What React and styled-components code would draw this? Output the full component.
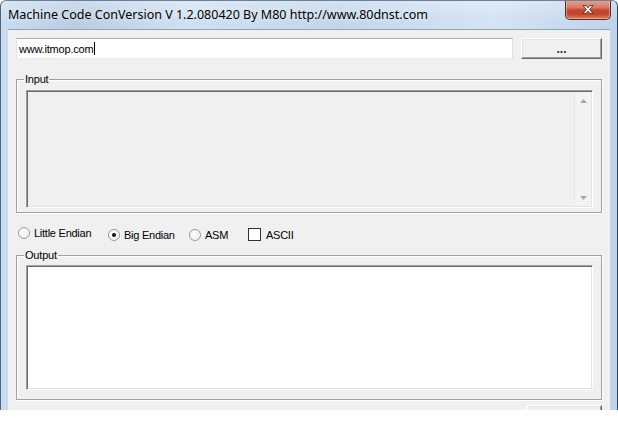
import React from "react";
import styled, { createGlobalStyle } from "styled-components";

const Global = createGlobalStyle`
  html, body { margin: 0; padding: 0; background: #fff; }
  body { font-family: "Liberation Sans", Arial, sans-serif; }
  * { box-sizing: border-box; }
`;

const Window = styled.div`
  width: 618px;
  height: 410px;
  display: flex;
  flex-direction: column;
  overflow: hidden;
  border-left: 1px solid #4f6379;
  border-right: 1px solid #34465a;
  border-top: 1px solid #6c7f95;
  border-radius: 6px 6px 0 0;
  background: linear-gradient(90deg, #cadcef 0%, #b9cde2 12%, #cfe0f1 30%, #c2d6eb 55%, #d4e4f3 80%, #bed3ea 100%);
`;

const TitleBar = styled.div`
  height: 28px;
  display: flex;
  align-items: flex-start;
  justify-content: space-between;
  padding-left: 7px;
  background: linear-gradient(180deg, rgba(255,255,255,0.3), rgba(255,255,255,0) 70%);
`;

const Title = styled.div`
  font-family: "Noto Sans", "Open Sans", sans-serif;
  font-size: 12.5px;
  line-height: 28px;
  color: #000;
  text-shadow: 0 0 6px rgba(255,255,255,0.9);
  white-space: nowrap;
`;

const CloseButton = styled.div`
  width: 46px;
  height: 20px;
  margin-right: 6px;
  margin-top: -1px;
  border: 1px solid #5e2a22;
  border-top: none;
  border-radius: 0 0 5px 5px;
  background: linear-gradient(180deg, #e5a595 0%, #d57a64 40%, #c5432b 55%, #c4452c 75%, #d9826a 100%);
  box-shadow: inset 0 0 0 1px rgba(255, 220, 210, 0.45);
  display: flex;
  align-items: center;
  justify-content: center;
`;

const Client = styled.div`
  flex: 1;
  margin: 0 7px;
  background: #f0f0f0;
  border-top: 1px solid #8fa3b9;
  padding: 8px 8px 0 8px;
  display: flex;
  flex-direction: column;
`;

const TopRow = styled.div`
  display: flex;
  gap: 8px;
  height: 21px;
`;

const TextBox = styled.div`
  width: 497px;
  height: 21px;
  border: 1px solid;
  border-color: #abadb3 #dbdfe6 #e3e9ef #e2e3ea;
  background: #fff;
  padding: 0 2px;
  display: flex;
  align-items: center;
  font-size: 11px;
  letter-spacing: -0.2px;
  color: #000;
`;

const Caret = styled.span`
  display: inline-block;
  width: 1px;
  height: 13px;
  background: #000;
  margin-left: 1px;
`;

const PushButton = styled.div`
  width: ${(p) => p.$w}px;
  height: 21px;
  margin-left: ${(p) => p.$ml || 0}px;
  border: 1px solid;
  border-color: #fff #696969 #696969 #fff;
  box-shadow: inset -1px -1px 0 #a0a0a0, inset 1px 1px 0 #e3e3e3;
  background: #f0f0f0;
  display: flex;
  align-items: center;
  justify-content: center;
  font-size: 12px;
  font-weight: bold;
  color: #1a2a6a;
  flex-shrink: 0;
`;

const GroupBox = styled.div`
  position: relative;
  margin-top: ${(p) => p.$mt}px;
  border: 1px solid #a0a0a0;
  box-shadow: 1px 1px 0 #fff, inset 1px 1px 0 #fff;
  padding: ${(p) => p.$pad};
`;

const GroupLabel = styled.span`
  position: absolute;
  top: -7px;
  left: 7px;
  padding: 0 1px;
  background: #f0f0f0;
  font-size: 11px;
  line-height: 13px;
  letter-spacing: -0.2px;
  color: #000;
`;

const TextArea = styled.div`
  width: 567px;
  height: ${(p) => p.$h}px;
  border: 1px solid;
  border-color: #a0a0a0 #fff #fff #a0a0a0;
  box-shadow: inset 1px 1px 0 #696969, inset -1px -1px 0 #e3e3e3;
  background: ${(p) => (p.$disabled ? "#f0f0f0" : "#fff")};
  padding: 1px;
  display: flex;
`;

const TextFill = styled.div`
  flex: 1;
`;

const ScrollBar = styled.div`
  width: 17px;
  display: flex;
  flex-direction: column;
  justify-content: space-between;
  background: #f3f3f3;
  border-left: 1px solid #e6e6e6;
`;

const ScrollArrow = styled.div`
  height: 17px;
  display: flex;
  align-items: center;
  justify-content: center;
`;

const OptionRow = styled.div`
  display: flex;
  align-items: center;
  height: 17px;
  margin-top: 13px;
  padding-left: 2px;
`;

const Option = styled.label`
  width: ${(p) => p.$w}px;
  display: flex;
  align-items: center;
  gap: ${(p) => p.$gap}px;
  font-size: 11px;
  letter-spacing: -0.25px;
  color: #000;
  flex-shrink: 0;
  transform: translateY(${(p) => p.$dy || 0}px);
`;

const Radio = styled.span`
  width: 12px;
  height: 12px;
  border-radius: 50%;
  border: 1px solid #9a9a9a;
  background: radial-gradient(circle at 40% 40%, #ffffff 0%, #f4f4f4 45%, #dcdcdc 100%);
  box-shadow: inset 0 0 0 1px #fafafa;
  display: flex;
  align-items: center;
  justify-content: center;
  flex-shrink: 0;
`;

const RadioDot = styled.span`
  width: 4px;
  height: 4px;
  border-radius: 50%;
  background: #111;
`;

const Check = styled.span`
  width: 13px;
  height: 13px;
  border: 1px solid #333;
  background: #fff;
  flex-shrink: 0;
`;

const BottomRow = styled.div`
  display: flex;
  justify-content: flex-end;
  margin-top: 5px;
`;

const UpArrow = () => (
  <svg width="7" height="4" viewBox="0 0 7 4">
    <path d="M0 4 L3.5 0 L7 4 Z" fill="#a8a8a8" />
  </svg>
);
const DownArrow = () => (
  <svg width="7" height="4" viewBox="0 0 7 4">
    <path d="M0 0 L3.5 4 L7 0 Z" fill="#a8a8a8" />
  </svg>
);

const CloseGlyph = () => (
  <svg width="14" height="11" viewBox="0 0 14 11">
    <path
      d="M2 1.5 L5 1.5 L7 3.8 L9 1.5 L12 1.5 L8.6 5.5 L12 9.5 L9 9.5 L7 7.2 L5 9.5 L2 9.5 L5.4 5.5 Z"
      fill="#fff"
      stroke="#5a2a24"
      strokeWidth="0.9"
      strokeLinejoin="round"
    />
  </svg>
);

export default function App() {
  return (
    <>
      <Global />
      <Window>
        <TitleBar>
          <Title>Machine Code ConVersion V 1.2.080420 By M80 http://www.80dnst.com</Title>
          <CloseButton>
            <CloseGlyph />
          </CloseButton>
        </TitleBar>
        <Client>
          <TopRow>
            <TextBox>
              www.itmop.com
              <Caret />
            </TextBox>
            <PushButton $w={81}>...</PushButton>
          </TopRow>

          <GroupBox $mt={20} $pad="10px 8px 4px 9px">
            <GroupLabel>Input</GroupLabel>
            <TextArea $h={118} $disabled>
              <TextFill />
              <ScrollBar>
                <ScrollArrow>
                  <UpArrow />
                </ScrollArrow>
                <ScrollArrow>
                  <DownArrow />
                </ScrollArrow>
              </ScrollBar>
            </TextArea>
          </GroupBox>

          <OptionRow>
            <Option $w={90} $gap={4} $dy={-2}>
              <Radio />
              Little Endian
            </Option>
            <Option $w={81} $gap={4}>
              <Radio>
                <RadioDot />
              </Radio>
              Big Endian
            </Option>
            <Option $w={59} $gap={4}>
              <Radio />
              ASM
            </Option>
            <Option $w={80} $gap={5}>
              <Check />
              ASCII
            </Option>
          </OptionRow>

          <GroupBox $mt={12} $pad="9px 8px 9px 9px">
            <GroupLabel>Output</GroupLabel>
            <TextArea $h={125} />
          </GroupBox>

          <BottomRow>
            <PushButton $w={75} />
          </BottomRow>
        </Client>
      </Window>
    </>
  );
}
